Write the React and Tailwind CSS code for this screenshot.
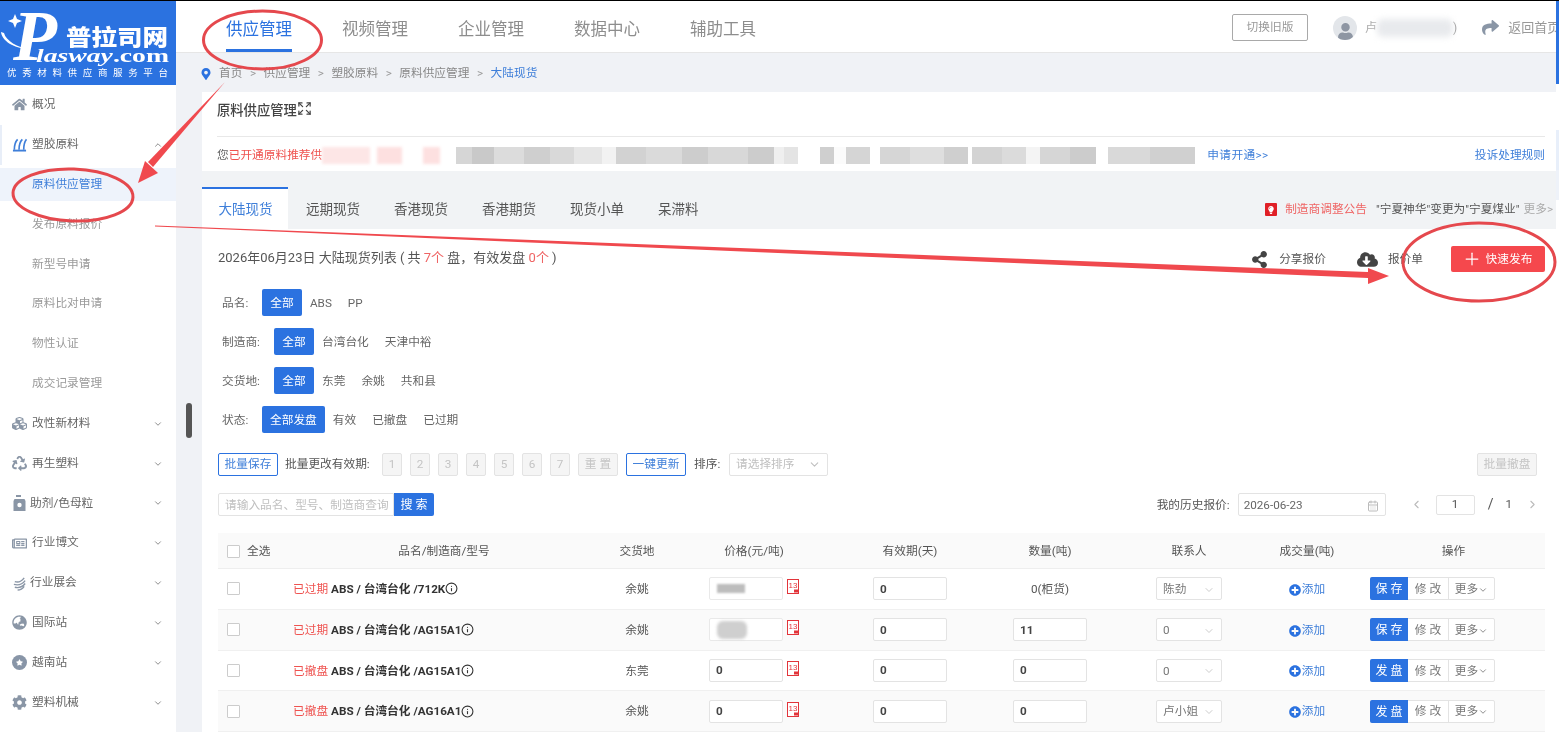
import { ChevronDown, ChevronUp, ChevronLeft, ChevronRight, Info, Plus, CalendarDays, Expand } from "lucide-react";
import {
  FaHome, FaCubes, FaRecycle, FaRegNewspaper, FaGlobeAsia, FaCog, FaShare, FaMapMarkerAlt,
  FaShareAlt, FaCloudDownloadAlt, FaPlusCircle, FaStar, FaLightbulb, FaUser,
} from "react-icons/fa";

const subMenu = ["原料供应管理", "发布原料报价", "新型号申请", "原料比对申请", "物性认证", "成交记录管理"];

const bottomMenu = [
  { name: "改性新材料", icon: <FaCubes className="text-[15px]" /> },
  { name: "再生塑料", icon: <FaRecycle className="text-[15px]" /> },
  { name: "助剂/色母粒", icon: <Bottle />, tight: true },
  { name: "行业博文", icon: <FaRegNewspaper className="text-[15px]" /> },
  { name: "行业展会", icon: <Waves />, tight: true },
  { name: "国际站", icon: <FaGlobeAsia className="text-[15px]" /> },
  { name: "越南站", icon: <StarBadge /> },
  { name: "塑料机械", icon: <FaCog className="text-[15px]" /> },
];

const rows = [
  { status: "已过期", model: "ABS / 台湾台化 /712K", place: "余姚", price: "blur", qty: "0(柜货)", contact: "陈劲", action: "保 存" },
  { status: "已过期", model: "ABS / 台湾台化 /AG15A1", place: "余姚", price: "blob", qty: "11", contact: "0", action: "保 存", alt: true },
  { status: "已撤盘", model: "ABS / 台湾台化 /AG15A1", place: "东莞", price: "0", qty: "0", contact: "0", action: "发 盘" },
  { status: "已撤盘", model: "ABS / 台湾台化 /AG16A1", place: "余姚", price: "0", qty: "0", contact: "卢小姐", action: "发 盘", alt: true },
];

const redactBand = [
  "w-[16px] bg-[#d6d6d6]", "w-[22px] bg-[#c9c9c9]", "w-[30px] bg-[#dcdcdc]", "w-[26px] bg-[#cfcfcf]", "w-[24px] bg-[#d9d9d9]",
  "w-[28px] bg-[#e6e6e6]", "w-[14px] bg-[#f2f2f2]", "w-[30px] bg-[#d2d2d2]", "w-[36px] bg-[#dadada]", "w-[26px] bg-[#cdcdcd]",
  "w-[40px] bg-[#d8d8d8]", "w-[26px] bg-[#cccccc]", "w-[10px] bg-[#efefef]", "w-[14px] bg-[#e4e4e4]", "w-[22px] bg-[#ffffff]",
  "w-[14px] bg-[#cfcfcf]", "w-[12px] bg-[#fbfbfb]", "w-[24px] bg-[#d5d5d5]", "w-[10px] bg-[#ffffff]", "w-[30px] bg-[#d6d6d6]",
  "w-[34px] bg-[#dedede]", "w-[24px] bg-[#cfcfcf]", "w-[4px] bg-[#ffffff]", "w-[30px] bg-[#d3d3d3]", "w-[24px] bg-[#dbdbdb]",
  "w-[14px] bg-[#f4f4f4]", "w-[30px] bg-[#d6d6d6]", "w-[26px] bg-[#cccccc]", "w-[12px] bg-[#ffffff]", "w-[42px] bg-[#d9d9d9]",
  "w-[45px] bg-[#d0d0d0]",
];

function Waves() {
  return (
    <svg width="15" height="15" viewBox="0 0 16 16" fill="none" stroke="currentColor" strokeWidth="1.5">
      <path d="M3 6c3 1 7 0 10-4M2 9c4 1 9 0 12-4M3 12c4 1 8 0 11-4M6 15c3 0 5-1 7-4" />
    </svg>
  );
}

function Bottle() {
  return (
    <svg width="13" height="16" viewBox="0 0 13 16" fill="currentColor">
      <rect x="3" y="0" width="5" height="2" />
      <path d="M1.5 4h10l1 2v10H.5V6z" />
      <circle cx="6.5" cy="10" r="2.2" fill="#fff" />
    </svg>
  );
}

function Stacks() {
  return (
    <svg width="16" height="15" viewBox="0 0 16 15" fill="none" stroke="#3f7fd9" strokeWidth="1.8">
      <path d="M1 14h14" strokeWidth="2" />
      <path d="M2.5 13c0-4 .5-8 3.5-11M7.5 13c0-4 .5-8 3.5-11M12.5 13c0-4 .5-8 3-11" />
    </svg>
  );
}

function StarBadge() {
  return (
    <span className="w-[15px] h-[15px] rounded-full bg-[#8895a7] flex items-center justify-center">
      <FaStar className="text-[7px] text-white" />
    </span>
  );
}

function Logo() {
  return (
    <svg width="176" height="84" viewBox="0 0 176 84" className="block">
      <path d="M1 31c1 9 12 16 30 18-14-3-25-9-27-17z" fill="#fff" />
      <path d="M15 13l2 5 5 2-5 2-2 5-2-5-5-2 5-2z" fill="#fff" />
      <text x="13" y="59" fontSize="72" fontWeight="700" fontStyle="italic" fill="#fff" fontFamily="'Liberation Serif', serif">P</text>
      <text x="66" y="44" fontSize="22" fontWeight="900" fill="#fff" fontFamily="'Noto Sans CJK SC', sans-serif" textLength="102" lengthAdjust="spacingAndGlyphs">普拉司网</text>
      <text x="36" y="61" fontSize="19" fontWeight="700" fill="#fff" fontFamily="'Liberation Serif', serif" textLength="133" lengthAdjust="spacingAndGlyphs">
        <tspan fontStyle="italic">lasway</tspan>.com
      </text>
      <text x="7" y="75" fontSize="9.5" fill="#fff" fontFamily="'Noto Sans CJK SC', sans-serif" textLength="161">优秀材料供应商服务平台</text>
    </svg>
  );
}

function SideRow({ icon, name, open, tight, active }) {
  return (
    <div className={`h-[39.85px] flex items-center pr-[13px] text-[11.7px] text-[#666] ${active ? "border-l-2 border-[#e8eef8] pl-[10px]" : "pl-[12px]"}`}>
      <span className="w-[15px] flex justify-center text-[#8a96a6] shrink-0">{icon}</span>
      <span className={tight ? "ml-[3px]" : "ml-[5px]"}>{name}</span>
      {open === undefined ? null : open ? (
        <ChevronUp size={10} className="ml-auto text-[#777]" />
      ) : (
        <ChevronDown size={10} className="ml-auto text-[#777]" />
      )}
    </div>
  );
}

function Sidebar() {
  return (
    <aside className="w-[176px] shrink-0 bg-white">
      <div className="h-[84px] bg-[#2b72e0]">
        <Logo />
      </div>
      <SideRow name="概况" icon={<FaHome className="text-[15px]" />} />
      <SideRow name="塑胶原料" open icon={<Stacks />} active />
      {subMenu.map((s, i) => (
        <div key={s} className="h-[39.85px] flex items-center">
          <div className={`w-full h-[33px] pl-[32px] flex items-center text-[11.7px] ${i === 0 ? "bg-[#eef3fb] text-[#3f7fd9]" : "text-[#9a9a9a]"}`}>
            {s}
          </div>
        </div>
      ))}
      {bottomMenu.map((m) => (
        <SideRow key={m.name} name={m.name} icon={m.icon} open={false} tight={m.tight} />
      ))}
    </aside>
  );
}

function TopBar() {
  return (
    <header className="h-[52px] shrink-0 bg-white border-b border-[#e6e6e6] flex">
      <nav className="flex-1 flex pl-[50px] gap-[50px]">
        <div className="relative flex items-center text-[16.5px] text-[#2b72e0] pt-[8px]">
          供应管理
          <span className="absolute left-0 right-0 bottom-0 h-[3px] bg-[#2b72e0]" />
        </div>
        {["视频管理", "企业管理", "数据中心", "辅助工具"].map((t) => (
          <div key={t} className="flex items-center text-[16.5px] text-[#8d8d8d] pt-[8px]">{t}</div>
        ))}
      </nav>
      <div className="w-[324px] shrink-0 overflow-hidden whitespace-nowrap flex items-center pt-[2px]">
        <div className="w-[76px] h-[27px] shrink-0 border border-[#a9a9a9] rounded-[2px] flex items-center justify-center text-[11.7px] text-[#999]">切换旧版</div>
        <div className="ml-[25px] w-[24px] h-[24px] shrink-0 rounded-full bg-[#e3e6ea] flex items-end justify-center overflow-hidden">
          <FaUser className="text-[17px] text-[#8e96a3]" />
        </div>
        <span className="ml-[8px] text-[12px] text-[#aaa]">卢</span>
        <span className="w-[76px] h-[18px] shrink-0 bg-[#e8eaed] rounded-[6px] blur-[3px]" />
        <span className="text-[12px] text-[#999]">)</span>
        <FaShare className="ml-[25px] text-[17px] shrink-0 text-[#8a96a6]" />
        <span className="ml-[9px] text-[13px] text-[#999]">返回首页</span>
      </div>
    </header>
  );
}

function Breadcrumb() {
  const parts = ["首页", "供应管理", "塑胶原料", "原料供应管理"];
  return (
    <div className="h-[39px] shrink-0 flex items-center pt-[2px] text-[11.7px] text-[#888] whitespace-nowrap">
      <FaMapMarkerAlt className="text-[12px] text-[#2b72e0] -ml-[2px] mr-[7px]" />
      {parts.map((p) => (
        <span key={p} className="flex items-center">
          {p}
          <span className="mx-[7.5px] text-[#999]">&gt;</span>
        </span>
      ))}
      <span className="text-[#3f7fd9]">大陆现货</span>
    </div>
  );
}

function NoticeCard() {
  return (
    <section className="h-[79px] shrink-0 bg-white px-[15px] pr-[11px] flex flex-col">
      <div className="h-[45px] flex items-center border-b border-[#e8e8e8] text-[13.3px] font-medium text-[#444] pb-[7px]">
        原料供应管理
        <Expand size={15} className="text-[#444] -mt-[4px]" />
      </div>
      <div className="flex-1 flex items-center pt-[3px] text-[11.7px] whitespace-nowrap">
        <span className="text-[#666]">您</span>
        <span className="text-[#ef5350]">已开通原料推荐供</span>
        <span className="w-[48px] h-[17px] shrink-0 bg-[#fde6e6] blur-[1.5px]" />
        <span className="w-[7px] h-[17px] shrink-0 bg-[#fff]" />
        <span className="w-[25px] h-[17px] shrink-0 bg-[#fde0e0] blur-[1.5px]" />
        <span className="w-[21px] h-[17px] shrink-0 bg-[#fff]" />
        <span className="w-[17px] h-[17px] shrink-0 bg-[#fde0e0] blur-[1.5px]" />
        <span className="w-[16px] h-[17px] shrink-0 bg-[#fff]" />
        <div className="flex h-[17px] shrink-0 blur-[0.7px]">
          {redactBand.map((c, i) => (
            <span key={i} className={`h-full ${c}`} />
          ))}
        </div>
        <span className="ml-[12px] text-[#3f7fd9] tracking-[0.4px]">申请开通&gt;&gt;</span>
        <span className="ml-auto text-[#3f7fd9]">投诉处理规则</span>
      </div>
    </section>
  );
}

function Tabs() {
  return (
    <div className="h-[58px] shrink-0 bg-[#f1f3f5] flex items-end text-[13.5px] text-[#555] whitespace-nowrap">
      <div className="h-[42px] w-[86px] bg-white border-t-2 border-[#2b72e0] text-[#3f7fd9] flex items-center justify-center pt-[1px] pl-[1px]">大陆现货</div>
      <div className="ml-[1px] flex">
        {["远期现货", "香港现货", "香港期货", "现货小单", "呆滞料"].map((t) => (
          <div key={t} className="h-[42px] px-[17px] flex items-center pt-[3px]">{t}</div>
        ))}
      </div>
      <div className="ml-auto h-[42px] flex items-center pr-[3px] text-[11.7px] pt-[3px]">
        <span className="w-[12px] h-[13px] bg-[#e01f26] rounded-[1px] flex items-center justify-center">
          <FaLightbulb className="text-[8px] text-white" />
        </span>
        <span className="ml-[8px] text-[#ef6464]">制造商调整公告</span>
        <span className="ml-[9px] text-[#555]">"宁夏神华"变更为"宁夏煤业"</span>
        <span className="ml-[4px] text-[#aaa]">更多&gt;</span>
      </div>
    </div>
  );
}

function FilterRow({ label, labelWidth, options }) {
  return (
    <div className="h-[27px] flex items-center text-[11.7px] text-[#666] whitespace-nowrap">
      <span className={`pl-[4px] pt-[2px] ${labelWidth}`}>{label}</span>
      <span className="h-full px-[8px] pt-[2px] min-w-[40px] flex items-center justify-center bg-[#2b72e0] text-white rounded-[2px]">{options[0]}</span>
      <div className="ml-[8px] pt-[2px] flex gap-[16px]">
        {options.slice(1).map((o) => (
          <span key={o}>{o}</span>
        ))}
      </div>
    </div>
  );
}

function OutlineBtn({ children }) {
  return (
    <button className="w-[60px] h-[23px] border border-[#2b72e0] rounded-[2px] text-[11.7px] text-[#3f7fd9] bg-white whitespace-nowrap">{children}</button>
  );
}

function DisabledBtn({ children, className }) {
  return (
    <span className={`h-[23px] border border-[#e3e3e3] bg-[#f5f5f5] rounded-[2px] text-[11.7px] text-[#c4c4c4] flex items-center justify-center whitespace-nowrap ${className}`}>{children}</span>
  );
}

function Toolbar() {
  return (
    <div className="mt-[20px] flex items-center text-[11.7px] text-[#555] whitespace-nowrap">
      <OutlineBtn>批量保存</OutlineBtn>
      <span className="ml-[7px] w-[97px]">批量更改有效期:</span>
      <div className="flex gap-[8px]">
        {[1, 2, 3, 4, 5, 6, 7].map((n) => (
          <DisabledBtn key={n} className="w-[20px]">{n}</DisabledBtn>
        ))}
        <DisabledBtn className="w-[40px]">重 置</DisabledBtn>
        <OutlineBtn>一键更新</OutlineBtn>
      </div>
      <span className="ml-[8px] w-[35px]">排序:</span>
      <div className="w-[99px] h-[23px] border border-[#e3e3e3] rounded-[2px] px-[6px] flex items-center justify-between text-[#c0c0c0]">
        请选择排序
        <ChevronDown size={13} />
      </div>
      <DisabledBtn className="ml-auto w-[60px] mr-[19px]">批量撤盘</DisabledBtn>
    </div>
  );
}

function SearchRow() {
  return (
    <div className="mt-[17px] h-[23px] flex items-center text-[11.7px] whitespace-nowrap">
      <div className="w-[176px] h-full border border-[#e3e3e3] rounded-l-[2px] pl-[6px] pt-[2px] flex items-center text-[#c0c0c0] overflow-hidden">请输入品名、型号、制造商查询</div>
      <button className="w-[40px] h-full bg-[#2b72e0] text-white rounded-r-[2px] text-[12px]">搜 索</button>
      <span className="ml-auto pt-[2px] text-[#555]">我的历史报价:</span>
      <div className="ml-[8px] w-[148px] h-full border border-[#e3e3e3] rounded-[2px] pl-[5px] pr-[6px] pt-[2px] flex items-center justify-between text-[#666]">
        2026-06-23
        <CalendarDays size={12} className="text-[#bbb]" />
      </div>
      <ChevronLeft size={13} className="ml-[24px] text-[#bbb]" />
      <div className="ml-[13px] w-[39px] h-[20px] border border-[#e3e3e3] rounded-[2px] flex items-center justify-center text-[#555]">1</div>
      <span className="ml-[13px] text-[14px] text-[#555]">/</span>
      <span className="ml-[12px] text-[#555]">1</span>
      <ChevronRight size={13} className="ml-[14px] mr-[6px] text-[#bbb]" />
    </div>
  );
}

function TextInput({ value }) {
  return (
    <input
      readOnly
      value={value}
      className="w-[74px] h-[23px] border border-[#e3e3e3] rounded-[2px] bg-white px-[6px] text-[11.7px] font-bold text-[#444] outline-none"
    />
  );
}

function PriceCell({ price }) {
  return (
    <div className="flex items-center justify-center gap-[4px]">
      {price === "blur" || price === "blob" ? (
        <div className="w-[74px] h-[23px] border border-[#e9e9e9] rounded-[2px] bg-white flex items-center pl-[7px]">
          <span className={price === "blur" ? "w-[28px] h-[9px] bg-[#bdbdbd] blur-[1px]" : "w-[30px] h-[18px] rounded-[6px] bg-[#cfcfcf] blur-[1.5px]"} />
        </div>
      ) : (
        <TextInput value={price} />
      )}
      <svg width="12" height="15" viewBox="0 0 12 15" className="-mt-[4px]">
        <rect x="0.5" y="0.5" width="11" height="14" fill="#fff" stroke="#e2343a" />
        <text x="1.5" y="9" fontSize="8" fill="#e2343a" fontFamily="'Liberation Sans', sans-serif">13</text>
        <rect x="7" y="10.5" width="4" height="3" fill="#e2343a" />
      </svg>
    </div>
  );
}

function ProductTable() {
  const gridCols = "grid grid-cols-[58px_336px_50px_184px_128px_152px_126px_110px_183px] items-center";
  return (
    <div className="mt-[17px] mr-[11px] text-[11.7px] text-[#555] whitespace-nowrap">
      <div className={`${gridCols} h-[36px] pt-[2px] bg-[#fafafa] border-b border-[#eee] text-center`}>
        <div className="flex items-center pl-[9px] gap-[7px]">
          <span className="w-[13px] h-[13px] border border-[#ccc] rounded-[1px] bg-white" />
          全选
        </div>
        <div>品名/制造商/型号</div>
        <div>交货地</div>
        <div>价格(元/吨)</div>
        <div>有效期(天)</div>
        <div>数量(吨)</div>
        <div>联系人</div>
        <div>成交量(吨)</div>
        <div>操作</div>
      </div>
      {rows.map((r, i) => (
        <div key={i} className={`${gridCols} h-[40.75px] border-b border-[#f0f0f0] text-center ${r.alt ? "bg-[#fafafa]" : "bg-white"}`}>
          <div className="pl-[9px]">
            <span className="block w-[13px] h-[13px] border border-[#ccc] rounded-[1px] bg-white" />
          </div>
          <div className="pl-[17px] pt-[2px] flex items-center">
            <span className="text-[#ef5350]">{r.status}</span>
            <span className="ml-[3px] font-bold text-[#333]">{r.model}</span>
            <Info size={13} className="text-[#333] -mt-[2px]" />
          </div>
          <div className="pt-[2px]">{r.place}</div>
          <PriceCell price={r.price} />
          <div className="flex justify-center"><TextInput value="0" /></div>
          <div className="flex justify-center">
            {r.qty.includes("柜") ? <span className="pt-[2px]">{r.qty}</span> : <TextInput value={r.qty} />}
          </div>
          <div className="flex justify-center">
            <div className="w-[66px] h-[23px] border border-[#e3e3e3] rounded-[2px] bg-white pl-[6px] pr-[6px] pt-[2px] flex items-center justify-between text-[#777]">
              {r.contact}
              <ChevronDown size={12} className="text-[#ccc]" />
            </div>
          </div>
          <div className="flex items-center justify-center pt-[2px] text-[#3f7fd9]">
            <FaPlusCircle className="text-[12px] text-[#2b72e0] mr-[1px]" />
            添加
          </div>
          <div className="pl-[8px]">
            <div className="w-[125px] h-[23px] flex border border-[#e3e3e3] rounded-[2px] bg-white text-[#777]">
              <span className="w-[38px] -my-[1px] -ml-[1px] bg-[#2b72e0] text-white text-[12px] pt-[1px] rounded-l-[2px] flex items-center justify-center">{r.action}</span>
              <span className="w-[41px] border-r border-[#e3e3e3] flex items-center justify-center pt-[2px]">修 改</span>
              <span className="flex-1 flex items-center justify-center pt-[2px]">更多<ChevronDown size={10} /></span>
            </div>
          </div>
        </div>
      ))}
    </div>
  );
}

function Annotations() {
  return (
    <svg width="1559" height="732" viewBox="0 0 1559 732" fill="none" className="absolute inset-0 pointer-events-none">
      <g stroke="#e5484d" strokeWidth="3">
        <ellipse cx="262.5" cy="39" rx="59" ry="29" />
        <ellipse cx="73" cy="194" rx="60" ry="26" transform="rotate(2 73 194)" />
        <ellipse cx="1479" cy="261" rx="76" ry="39" />
      </g>
      <g fill="#f0494e">
        <polygon points="225,81 153,166 148,161" />
        <polygon points="138,182 145,160 158,172" />
        <polygon points="155,224.5 1368,271 1368,277 155,225.5" />
        <polygon points="1389,275 1368,267 1368,283" />
      </g>
    </svg>
  );
}

export default function App() {
  return (
    <div className="relative h-[732px] w-[1559px] overflow-hidden border-t border-black flex bg-white blur-[0.35px] font-['Roboto','Noto_Sans_CJK_SC',sans-serif]">
      <Sidebar />
      <div className="flex-1 min-w-0 flex flex-col">
        <TopBar />
        <div className="flex-1 flex min-h-0 bg-[#f0f2f6]">
          <div className="w-[26px] shrink-0 pt-[350px] pl-[10px]">
            <div className="w-[6px] h-[35px] rounded-[3px] bg-[#555]" />
          </div>
          <main className="flex-1 min-w-0 flex flex-col">
            <Breadcrumb />
            <NoticeCard />
            <Tabs />
            <div className="flex-1 bg-white pl-[16px] pt-[17px]">
              <div className="h-[26px] pr-[11px] flex items-center text-[13px] text-[#555] whitespace-nowrap">
                <span className="pb-[2px]">2026年06月23日 大陆现货列表 ( 共 <span className="text-[#ef6464]">7个</span> 盘，有效发盘 <span className="text-[#ef6464]">0个</span> )</span>
                <div className="ml-auto flex items-center text-[11.7px]">
                  <FaShareAlt className="text-[17px] text-[#444]" />
                  <span className="ml-[11px] pt-[2px]">分享报价</span>
                  <FaCloudDownloadAlt className="ml-[31px] text-[21px] text-[#444]" />
                  <span className="ml-[10px] pt-[2px]">报价单</span>
                  <button className="ml-[28px] w-[94px] h-[26px] bg-[#f5484d] rounded-[2px] text-white flex items-center justify-center gap-[4px] pr-[2px]">
                    <Plus size={20} strokeWidth={1.5} />
                    <span className="pt-[1px]">快速发布</span>
                  </button>
                </div>
              </div>
              <div className="mt-[17px] flex flex-col gap-[12px]">
                <FilterRow label="品名:" labelWidth="w-[44px]" options={["全部", "ABS", "PP"]} />
                <FilterRow label="制造商:" labelWidth="w-[56px]" options={["全部", "台湾台化", "天津中裕"]} />
                <FilterRow label="交货地:" labelWidth="w-[56px]" options={["全部", "东莞", "余姚", "共和县"]} />
                <FilterRow label="状态:" labelWidth="w-[44px]" options={["全部发盘", "有效", "已撤盘", "已过期"]} />
              </div>
              <Toolbar />
              <div className="pr-[11px]"><SearchRow /></div>
              <ProductTable />
            </div>
          </main>
        </div>
      </div>
      <div className="w-[3px] shrink-0 flex flex-col">
        <div className="h-[83px] bg-[#2b72e0]" />
        <div className="h-[46px] bg-white" />
        <div className="h-[40px] bg-[#e8effa]" />
        <div className="h-[30px] bg-[#eef2f9]" />
      </div>
      <Annotations />
    </div>
  );
}
